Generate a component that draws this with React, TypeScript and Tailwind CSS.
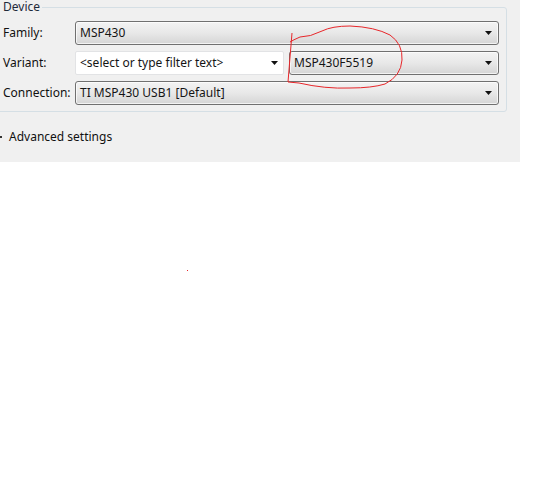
import React from "react";

const font = { fontFamily: '"Noto Sans", "Open Sans", sans-serif' };

function Arrow() {
  return (
    <svg width="8" height="5" viewBox="0 0 8 5" className="shrink-0">
      <polygon points="0,0 7,0 3.5,4" fill="#111" />
    </svg>
  );
}

function Combo({ text, className = "" }: { text: string; className?: string }) {
  return (
    <div
      className={
        "h-[24px] flex items-center justify-between pl-[4px] pr-[5px] rounded-[3px] border border-[#707070] bg-gradient-to-b from-[#f3f3f3] via-[#e8e8e8] to-[#d5d5d5] shadow-[inset_0_0_0_1px_rgba(255,255,255,0.7)] text-[#151515] " +
        className
      }
    >
      <span className="leading-none">{text}</span>
      <Arrow />
    </div>
  );
}

export default function App() {
  return (
    <div className="relative w-[537px] h-[503px] bg-white text-[12px] overflow-hidden" style={font}>
      <div className="w-[520px] h-[162px] bg-[#f0f0f0] flex flex-col">
        <fieldset className="ml-[-10px] w-[517px] h-[113px] mt-[-1px] border border-[#d5dfe5] rounded-[3px] pl-[12px] pr-[7px] pt-[6px]">
          <legend className="ml-[-4px] pl-[4px] pr-[2px] leading-[16px] text-[#1e2a3a]">Device</legend>
          <div className="grid grid-cols-[72px_1fr] gap-y-[6px] items-center">
            <span className="text-[#111]">Family:</span>
            <Combo text="MSP430" />
            <span className="text-[#111]">Variant:</span>
            <div className="flex gap-[5px]">
              <div className="w-[209px] h-[24px] flex items-center justify-between pl-[4px] pr-[4px] bg-white border border-[#e2e3e5] rounded-[2px] text-[#151515]">
                <span className="leading-none">&lt;select or type filter text&gt;</span>
                <Arrow />
              </div>
              <Combo text="MSP430F5519" className="flex-1" />
            </div>
            <span className="text-[#111]">Connection:</span>
            <Combo text="TI MSP430 USB1 [Default]" />
          </div>
        </fieldset>
        <div className="flex items-center h-[50px]">
          <span className="w-[2px] h-[2px] bg-[#333] ml-0" />
          <span className="ml-[7px] text-[#111]">Advanced settings</span>
        </div>
      </div>

      <svg className="absolute left-0 top-0 pointer-events-none" width="537" height="503">
        <path
          d="M292,33 L288,82 L299,83 Q325,89 350,88 Q372,88 385,84 Q401,76 402,60 Q403,44 390,35 Q375,27 350,26 Q332,26 322,31 Q310,37 300,37 Q293,40 290,42"
          fill="none"
          stroke="#e8262a"
          strokeWidth="1"
        />
        <rect x="187" y="270" width="1" height="1" fill="#e8262a" />
      </svg>
    </div>
  );
}
